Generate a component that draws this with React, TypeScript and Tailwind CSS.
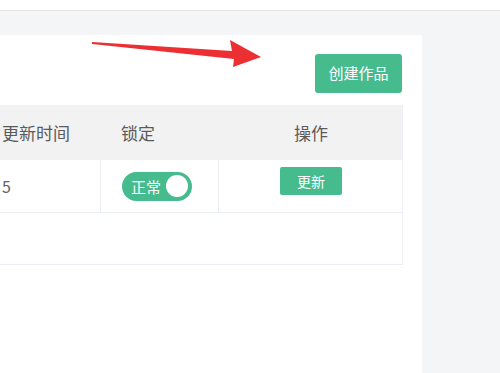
import React from "react";

const GREEN = "bg-[#45bb8e]";

function Toggle() {
  return (
    <div className={`${GREEN} w-[70px] h-[29px] rounded-full flex items-center justify-between pl-[9px] pr-[4px]`}>
      <span className="text-white text-[15px] leading-none">正常</span>
      <span className="w-[22px] h-[22px] rounded-full bg-white" />
    </div>
  );
}

function Arrow() {
  return (
    <svg className="absolute left-0 top-0 pointer-events-none" width="500" height="373" viewBox="0 0 500 373">
      <polygon
        points="92,42 232,51 230,40 261,57 233,67 234,59 92,44"
        fill="#ec2f33"
      />
    </svg>
  );
}

export default function App() {
  return (
    <div
      className="relative w-[500px] h-[373px] overflow-hidden bg-[#f4f5f7] flex flex-col text-[#606266]"
      style={{ fontFamily: '"Noto Sans CJK SC", "Noto Sans", sans-serif' }}
    >
      <div className="h-[11px] bg-white border-b border-[#e3e3e3] shrink-0" />
      <div className="flex-1 flex pt-[24px]">
        <div className="w-[422px] bg-white flex flex-col">
          <div className="h-[70px] flex justify-end items-start pt-[19px] pr-[20px]">
            <button className={`${GREEN} text-white text-[15px] w-[87px] h-[39px] rounded-[3px]`}>
              创建作品
            </button>
          </div>
          <div className="w-[403px] border-r border-b border-[#ebeef5]">
            <div className="grid grid-cols-[101px_118px_184px] h-[55px] bg-[#f2f2f2] text-[17px] text-[#5a5a5a]">
              <div className="flex items-center pl-[2px]">更新时间</div>
              <div className="flex items-center pl-[20px]">锁定</div>
              <div className="flex items-center justify-center">操作</div>
            </div>
            <div className="grid grid-cols-[101px_118px_184px] h-[53px] border-b border-[#ebeef5] text-[16px]">
              <div className="flex items-center pl-[2px] border-r border-[#ebeef5]">5</div>
              <div className="flex items-center pl-[21px] border-r border-[#ebeef5]">
                <Toggle />
              </div>
              <div className="flex justify-center pt-[7px]">
                <button className={`${GREEN} text-white text-[14px] w-[62px] h-[28px] rounded-[2px]`}>
                  更新
                </button>
              </div>
            </div>
            <div className="h-[51px]" />
          </div>
        </div>
        <div className="flex-1" />
      </div>
      <Arrow />
    </div>
  );
}
